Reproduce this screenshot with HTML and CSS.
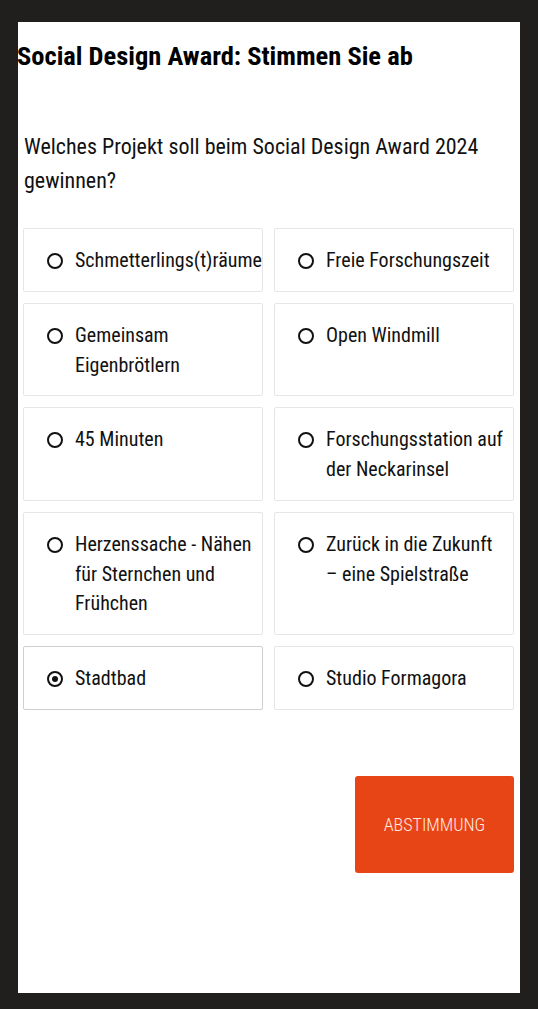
FILE: index.html
```html
<!DOCTYPE html>
<html lang="de">
<head>
    <meta charset="UTF-8">
    <title>Social Design Award</title>
    <link rel="stylesheet" href="styles.css">
</head>
<body>
<div class="poll">
    <h2 class="poll-title">Social Design Award: Stimmen Sie ab</h2>
    <p class="poll-question">Welches Projekt soll beim Social Design Award 2024 gewinnen?</p>
    <div class="poll-options">
        <label class="poll-option"><span class="radio"></span><span class="option-text">Schmetterlings(t)räume</span></label>
        <label class="poll-option"><span class="radio"></span><span class="option-text">Freie Forschungszeit</span></label>
        <label class="poll-option"><span class="radio"></span><span class="option-text">Gemeinsam Eigenbrötlern</span></label>
        <label class="poll-option"><span class="radio"></span><span class="option-text">Open Windmill</span></label>
        <label class="poll-option"><span class="radio"></span><span class="option-text">45 Minuten</span></label>
        <label class="poll-option"><span class="radio"></span><span class="option-text">Forschungsstation auf der Neckarinsel</span></label>
        <label class="poll-option"><span class="radio"></span><span class="option-text">Herzenssache - Nähen für Sternchen und Frühchen</span></label>
        <label class="poll-option"><span class="radio"></span><span class="option-text">Zurück in die Zukunft <span class="nowrap">– eine</span> Spielstraße</span></label>
        <label class="poll-option selected"><span class="radio"></span><span class="option-text">Stadtbad</span></label>
        <label class="poll-option"><span class="radio"></span><span class="option-text">Studio Formagora</span></label>
    </div>
    <div class="poll-footer">
        <a href="javascript:void(0);" class="poll-button">ABSTIMMUNG</a>
    </div>
</div>
</body>
</html>
```

FILE: styles.css
```css
html, body {
    margin: 0px;
    padding: 0px;
}

body {
    background: #201f1d;
    font-family: "Roboto Condensed", Roboto, "Liberation Sans", sans-serif;
    font-stretch: 75%;
    color: #111111;
}

.poll {
    margin: 22px 18px 16px 18px;
    height: 971px;
    background: #ffffff;
    padding: 18px 5px 0px 5px;
    box-sizing: border-box;
}

.poll-title {
    margin: 0px 0px 0px -6px;
    font-size: 26.5px;
    line-height: 32px;
    font-weight: 700;
    color: #000000;
}

.poll-question {
    margin: 58px 0px 30px 1px;
    font-size: 22px;
    line-height: 34px;
}

.poll-options {
    display: grid;
    grid-template-columns: 240px 240px;
    gap: 11px;
}

.poll-option {
    display: flex;
    align-items: flex-start;
    gap: 12px;
    padding: 17px 0px 15px 23px;
    border: 1px solid #e6e6e6;
    border-radius: 2px;
    font-size: 20px;
    line-height: 29.75px;
}

.poll-option.selected {
    border-color: #cfcfcf;
}

.nowrap {
    white-space: nowrap;
}

.radio {
    flex: none;
    width: 16px;
    height: 16px;
    margin-top: 7px;
    border: 2px solid #111111;
    border-radius: 50%;
    box-sizing: border-box;
    position: relative;
}

.selected .radio::after {
    content: "";
    position: absolute;
    left: 3px;
    top: 3px;
    width: 6px;
    height: 6px;
    border-radius: 50%;
    background: #111111;
}

.poll-footer {
    display: flex;
    justify-content: flex-end;
    padding-right: 1px;
    margin-top: 66px;
}

.poll-button {
    display: flex;
    align-items: center;
    justify-content: center;
    width: 159px;
    height: 97px;
    background: #e84516;
    color: #ffe9e0;
    border-radius: 3px;
    font-size: 18px;
    font-weight: 300;
    text-decoration: none;
}
```
